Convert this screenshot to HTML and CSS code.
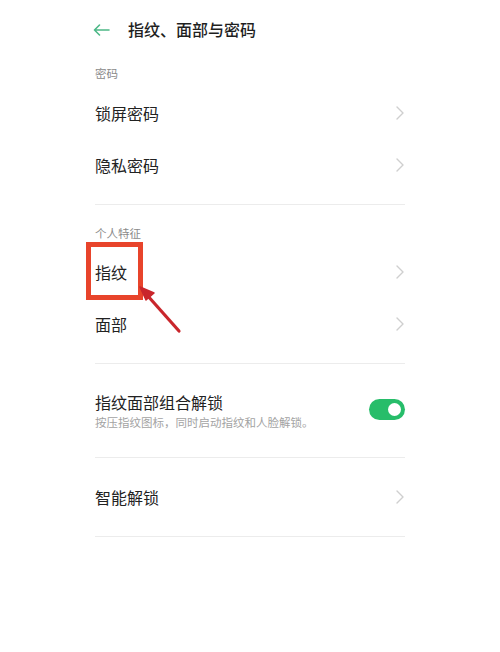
FILE: index.html
```html
<!DOCTYPE html>
<html lang="zh-CN">
<head>
<meta charset="utf-8">
<title>指纹、面部与密码</title>
<link rel="stylesheet" href="styles.css">
</head>
<body>
<div class="page">
  <header class="topbar">
    <svg class="back" width="17" height="12" viewBox="0 0 17 12"><path d="M16 6H1.5M6.5 1L1.5 6l5 5" fill="none" stroke="#4db887" stroke-width="1.6" stroke-linecap="round" stroke-linejoin="round"/></svg>
    <h1 class="title">指纹、面部与密码</h1>
  </header>

  <section class="group">
    <div class="label label-first">密码</div>
    <div class="row"><span class="row-text">锁屏密码</span><svg class="chev" width="8" height="14" viewBox="0 0 8 14"><path d="M1 1l6 6-6 6" fill="none" stroke="#cfcfcf" stroke-width="1.4" stroke-linecap="round" stroke-linejoin="round"/></svg></div>
    <div class="row"><span class="row-text">隐私密码</span><svg class="chev" width="8" height="14" viewBox="0 0 8 14"><path d="M1 1l6 6-6 6" fill="none" stroke="#cfcfcf" stroke-width="1.4" stroke-linecap="round" stroke-linejoin="round"/></svg></div>
    <div class="divider div-a"></div>
  </section>

  <section class="group">
    <div class="label label-second">个人特征</div>
    <div class="row"><span class="row-text">指纹</span><svg class="chev" width="8" height="14" viewBox="0 0 8 14"><path d="M1 1l6 6-6 6" fill="none" stroke="#cfcfcf" stroke-width="1.4" stroke-linecap="round" stroke-linejoin="round"/></svg></div>
    <div class="row"><span class="row-text">面部</span><svg class="chev" width="8" height="14" viewBox="0 0 8 14"><path d="M1 1l6 6-6 6" fill="none" stroke="#cfcfcf" stroke-width="1.4" stroke-linecap="round" stroke-linejoin="round"/></svg></div>
    <div class="divider div-b"></div>
  </section>

  <section class="group">
    <div class="row-switch">
      <div class="switch-text">
        <div class="row-text">指纹面部组合解锁</div>
        <div class="sub">按压指纹图标，同时启动指纹和人脸解锁。</div>
      </div>
      <div class="toggle"><span class="knob"></span></div>
    </div>
    <div class="divider"></div>
  </section>

  <section class="group">
    <div class="row row-last"><span class="row-text">智能解锁</span><svg class="chev" width="8" height="14" viewBox="0 0 8 14"><path d="M1 1l6 6-6 6" fill="none" stroke="#cfcfcf" stroke-width="1.4" stroke-linecap="round" stroke-linejoin="round"/></svg></div>
    <div class="divider"></div>
  </section>

  <div class="highlight"></div>
  <svg class="pointer" width="60" height="60" viewBox="0 0 60 60">
    <path d="M42 49L10 13" stroke="#c9262c" stroke-width="3.2" stroke-linecap="round"/>
    <path d="M3 5L17 11L9 18Z" fill="#c9262c" stroke="#c9262c" stroke-width="1.5" stroke-linejoin="round"/>
  </svg>
</div>
</body>
</html>
```

FILE: styles.css
```css
* { box-sizing: border-box; }
html, body { margin: 0; padding: 0; background: #fff; }
body {
  font-family: "Noto Sans CJK SC", "Noto Sans", sans-serif;
  color: #222;
}
.page {
  position: relative;
  width: 500px;
  height: 652px;
  padding: 0 95px 0 95px;
}
.topbar {
  height: 58px;
  display: flex;
  align-items: center;
  gap: 18px;
  margin-left: -2px;
}
.back { display: block; margin-top: 1px; }
.title {
  margin: 0;
  font-size: 16px;
  font-weight: 500;
  color: #1f1f1f;
  line-height: 22px;
  letter-spacing: 0;
}
.label {
  font-size: 11.5px;
  color: #8a8a8a;
  display: flex;
  align-items: center;
}
.label-first { height: 29px; }
.label-second { height: 27px; }
.row {
  height: 52px;
  display: flex;
  align-items: center;
  justify-content: space-between;
}
.row-text {
  font-size: 16px;
  line-height: 22px;
  color: #222;
}
.chev { display: block; margin-right: 1px; }
.divider { height: 1px; background: #ececec; }
.div-a { margin-top: 13px; margin-bottom: 14px; }
.div-b { margin-top: 13px; }
.row-switch {
  display: flex;
  align-items: flex-start;
  justify-content: space-between;
  padding-top: 27px;
  padding-bottom: 26px;
}
.switch-text { display: flex; flex-direction: column; }
.sub {
  font-size: 11.5px;
  line-height: 18px;
  color: #a3a3a3;
}
.toggle {
  width: 36px;
  height: 21px;
  border-radius: 11px;
  background: #27bd6a;
  margin-top: 8px;
  display: flex;
  align-items: center;
  justify-content: flex-end;
  padding-right: 4px;
}
.knob {
  width: 13px;
  height: 13px;
  border-radius: 50%;
  background: #fff;
}
.row-last { margin-top: 13px; margin-bottom: 13px; }
.highlight {
  position: absolute;
  left: 86px;
  top: 242px;
  width: 57px;
  height: 58px;
  border: 5px solid #e8442b;
}
.pointer {
  position: absolute;
  left: 137px;
  top: 282px;
}
```
